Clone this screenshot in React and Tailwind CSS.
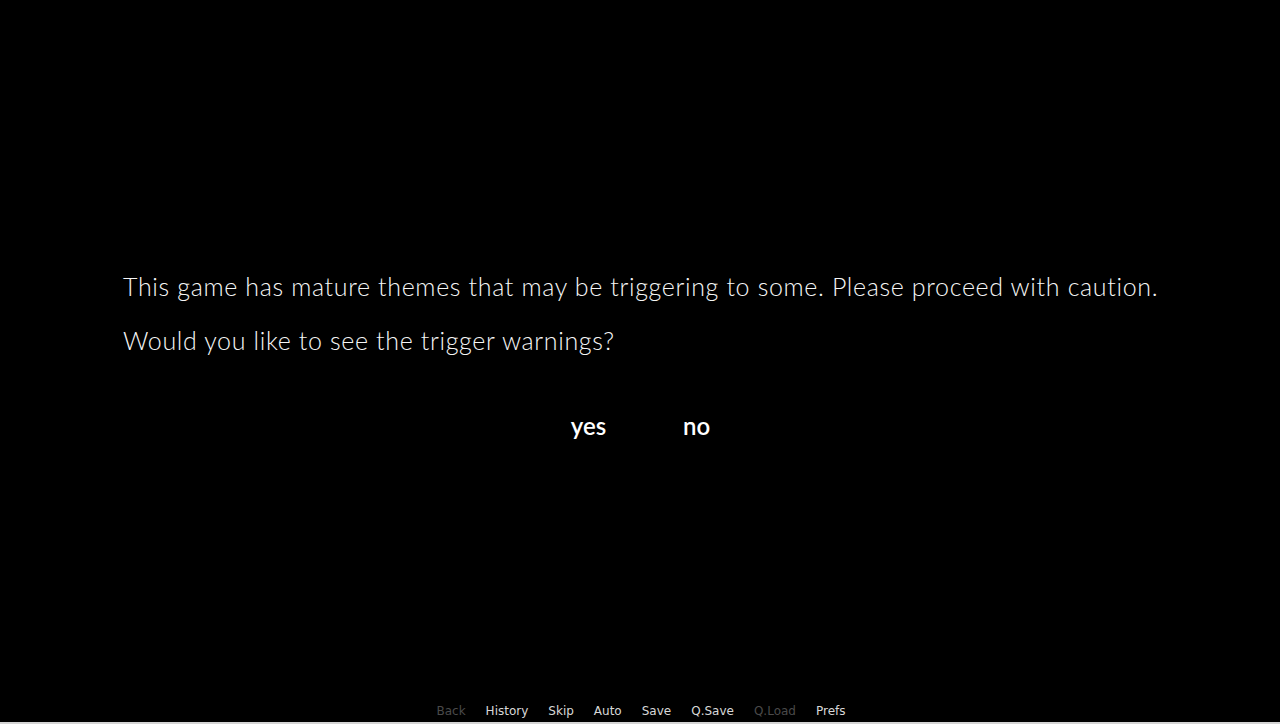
import React from "react";

const menuItems = [
  { label: "Back", enabled: false },
  { label: "History", enabled: true },
  { label: "Skip", enabled: true },
  { label: "Auto", enabled: true },
  { label: "Save", enabled: true },
  { label: "Q.Save", enabled: true },
  { label: "Q.Load", enabled: false },
  { label: "Prefs", enabled: true },
];

const QuickMenu = () => (
  <div className="flex justify-center gap-[20px] pl-[2px] pb-[3px] font-['DejaVu_Sans',sans-serif] text-[12px] leading-[16px]">
    {menuItems.map((item) => (
      <span key={item.label} className={item.enabled ? "text-[#d8d8d8]" : "text-[#4a4a4a]"}>
        {item.label}
      </span>
    ))}
  </div>
);

const App = () => {
  return (
    <div className="w-[1280px] h-[724px] bg-black flex flex-col overflow-hidden">
      <div className="flex-1 flex flex-col">
        <div className="pt-[259px] pl-[123px] font-['Lato',sans-serif] font-light text-[25px] tracking-[0.65px] leading-[54px] text-[#f6f6f6]">
          <p>This game has mature themes that may be triggering to some. Please proceed with caution.</p>
          <p>Would you like to see the trigger warnings?</p>
        </div>
        <div className="mt-[45px] flex justify-center gap-[77px] pl-[1px] font-['Lato',sans-serif] font-semibold text-[24px] leading-[28px] text-white">
          <span>yes</span>
          <span>no</span>
        </div>
      </div>
      <QuickMenu />
      <div className="h-[2px] bg-[#d4d4d4]" />
    </div>
  );
};

export default App;
